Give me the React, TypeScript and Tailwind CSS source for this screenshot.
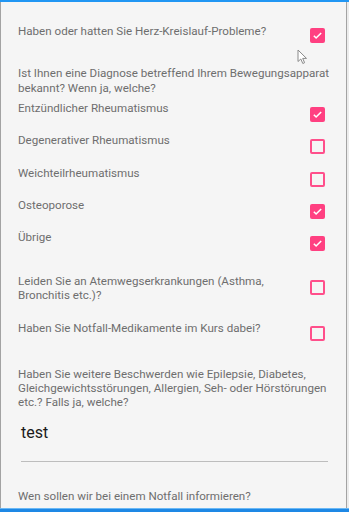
import React from 'react';

type Item = { label: string; checked: boolean };

const diagnoses: Item[] = [
  { label: 'Entzündlicher Rheumatismus', checked: true },
  { label: 'Degenerativer Rheumatismus', checked: false },
  { label: 'Weichteilrheumatismus', checked: false },
  { label: 'Osteoporose', checked: true },
  { label: 'Übrige', checked: true },
];

function Checkbox({ checked }: { checked: boolean }) {
  if (checked) {
    return (
      <div className="w-[15px] h-[15px] shrink-0 rounded-[2px] bg-[#ff4081] flex items-center justify-center">
        <svg width="11" height="11" viewBox="0 0 24 24" fill="none">
          <path d="M4 12.5l5 5L20 6.5" stroke="white" strokeWidth="3.4" />
        </svg>
      </div>
    );
  }
  return <div className="w-[15px] h-[15px] shrink-0 rounded-[2px] border-2 border-[#ff4f8b]" />;
}

function Row({ label, checked, offset = 'mt-[6px]' }: { label: React.ReactNode; checked: boolean; offset?: string }) {
  return (
    <div className="flex justify-between items-start">
      <p className="text-[11.6px] leading-[14px] text-[#6e6e6e] pr-4">{label}</p>
      <div className={offset}>
        <Checkbox checked={checked} />
      </div>
    </div>
  );
}

export default function App() {
  return (
    <div
      className="w-[349px] h-[512px] overflow-hidden relative bg-[#ececec] flex flex-col"
      style={{ fontFamily: 'Roboto, "Noto Sans", sans-serif' }}
    >
      <div className="h-[2px] bg-[#2196f3] shrink-0" />
      <div className="w-[347px] flex-1 bg-[#f5f5f5] border-l border-r border-[#a3a3a3] pl-[17px] pr-[21px] pt-[22px] flex flex-col">
        <Row label="Haben oder hatten Sie Herz-Kreislauf-Probleme?" checked={true} offset="mt-[4px]" />

        <p className="mt-[23px] mr-[-12px] text-[11.6px] leading-[15px] text-[#6e6e6e]">
          Ist Ihnen eine Diagnose betreffend Ihrem Bewegungsapparat bekannt? Wenn ja, welche?
        </p>

        <div className="mt-[5px] flex flex-col">
          {diagnoses.map((d) => (
            <div key={d.label} className="h-[32.3px]">
              <Row label={d.label} checked={d.checked} />
            </div>
          ))}
        </div>

        <div className="mt-[12px]">
          <Row
            label={
              <>
                Leiden Sie an Atemwegserkrankungen (Asthma,
                <br />
                Bronchitis etc.)?
              </>
            }
            checked={false}
            offset="mt-[6px]"
          />
        </div>

        <div className="mt-[19px]">
          <Row label="Haben Sie Notfall-Medikamente im Kurs dabei?" checked={false} offset="mt-[5px]" />
        </div>

        <p className="mt-[26px] mr-[-12px] text-[11.6px] leading-[14px] text-[#6e6e6e]">
          Haben Sie weitere Beschwerden wie Epilepsie, Diabetes,
          <br />
          Gleichgewichtsstörungen, Allergien, Seh- oder Hörstörungen
          <br />
          etc.? Falls ja, welche?
        </p>

        <div className="mt-[14px] ml-[3px] mr-[-3px] border-b border-[#bdbdbd] pb-[18px]">
          <p className="text-[16px] leading-[20px] text-[#1a1a1a]">test</p>
        </div>

        <p className="mt-[27px] text-[11.6px] leading-[14px] text-[#6e6e6e]">
          Wen sollen wir bei einem Notfall informieren?
        </p>
      </div>
      <div className="h-[4px] shrink-0 border-t border-[#6ab8f5] bg-[#1e88e5]" />

      <svg className="absolute left-[297px] top-[49px]" width="11" height="16" viewBox="0 0 11 16">
        <path d="M1 1 L1 12.5 L3.8 10 L5.8 14.5 L7.6 13.7 L5.7 9.4 L9.5 9.4 Z" fill="white" stroke="#8a8a8a" strokeWidth="1" strokeLinejoin="round" />
      </svg>
    </div>
  );
}
